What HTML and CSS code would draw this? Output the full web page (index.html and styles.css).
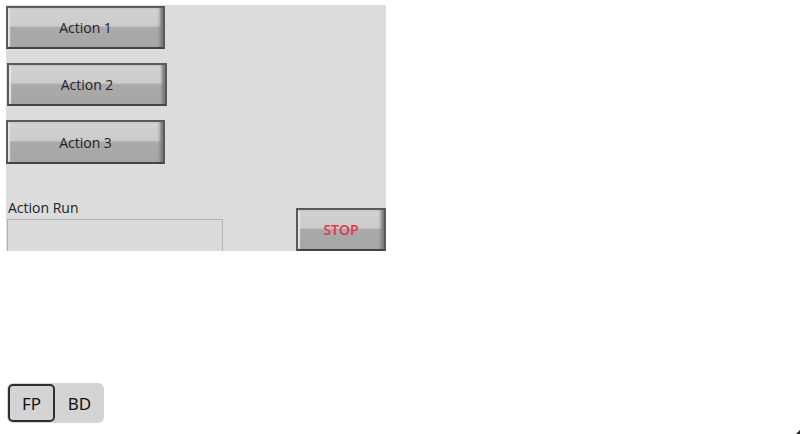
FILE: index.html
```html
<!DOCTYPE html>
<html>
<head>
<meta charset="utf-8">
<link rel="stylesheet" href="styles.css">
</head>
<body>
<div class="page">
  <div class="panel">
    <div class="buttons">
      <button class="lv-btn b1"><span>Action 1</span></button>
      <button class="lv-btn b2"><span>Action 2</span></button>
      <button class="lv-btn b3"><span>Action 3</span></button>
    </div>
    <div class="bottom-row">
      <div class="field-group">
        <div class="label">Action Run</div>
        <div class="field"></div>
      </div>
      <button class="lv-btn stop"><span>STOP</span></button>
    </div>
  </div>
  <div class="toggle">
    <div class="tab active">FP</div>
    <div class="tab">BD</div>
  </div>
</div>
<div class="grip"></div>
</body>
</html>
```
FILE: styles.css
```css
html, body {
  margin: 0;
  padding: 0;
  background: #ffffff;
  width: 800px;
  height: 434px;
  overflow: hidden;
  font-family: "Open Sans", "Noto Sans", "Liberation Sans", sans-serif;
}
.page {
  display: flex;
  flex-direction: column;
  padding: 5px 0 0 6px;
  height: 429px;
  box-sizing: border-box;
}
.panel {
  width: 380px;
  height: 246px;
  background: #dcdcdc;
  display: flex;
  flex-direction: column;
  box-sizing: border-box;
  padding-top: 1px;
}
.buttons {
  display: flex;
  flex-direction: column;
  gap: 14px;
  align-items: flex-start;
}
.lv-btn {
  position: relative;
  width: 159px;
  height: 43px;
  padding: 0;
  margin: 0;
  border: 2px solid #5a5a5a;
  border-bottom-color: #444;
  box-sizing: border-box;
  background: linear-gradient(to bottom, #d2d2d2 0%, #cccccc 46%, #aaaaaa 50%, #a6a6a6 100%);
  box-shadow: inset -4px 0 3px -1px #7a7a7a, inset 2px 0 1px #e4e4e4;
  font-family: "Open Sans", "Noto Sans", sans-serif;
  font-size: 14px;
  color: #222;
  display: flex;
  align-items: center;
  justify-content: center;
}
.lv-btn span {
  position: relative;
  top: 0px;
}
.b2 { margin-left: 1px; width: 160px; }
.b3 { height: 44px; }
.bottom-row {
  display: flex;
  justify-content: space-between;
  align-items: flex-end;
  margin-top: auto;
}
.field-group {
  display: flex;
  flex-direction: column;
  padding-left: 1px;
}
.label {
  font-size: 14px;
  color: #222;
  line-height: 18px;
  padding-left: 1px;
  margin-bottom: 2px;
}
.field {
  width: 216px;
  height: 32px;
  box-sizing: border-box;
  border: 1px solid #b4b4b4;
  border-bottom: none;
  background: #dadada;
}
.stop {
  width: 90px;
  height: 43px;
  color: #e8324c;
  font-size: 14px;
  font-weight: 600;
}
.toggle {
  margin-top: auto;
  margin-left: 1px;
  width: 97px;
  height: 40px;
  background: #d4d4d4;
  border-radius: 6px;
  display: flex;
  align-items: stretch;
  box-sizing: border-box;
  padding: 1px 0 1px 1px;
  margin-bottom: 6px;
}
.tab {
  display: flex;
  align-items: center;
  justify-content: center;
  font-family: "Noto Sans", "Open Sans", sans-serif;
  font-size: 17px;
  color: #111;
}
.tab.active {
  width: 47px;
  border: 2px solid #2e2e2e;
  border-radius: 5px;
  box-sizing: border-box;
}
.tab:not(.active) {
  flex: 1;
}
.grip {
  position: fixed;
  right: 0;
  bottom: 0;
  width: 0;
  height: 0;
  border-left: 4px solid transparent;
  border-bottom: 4px solid #222;
}
```
